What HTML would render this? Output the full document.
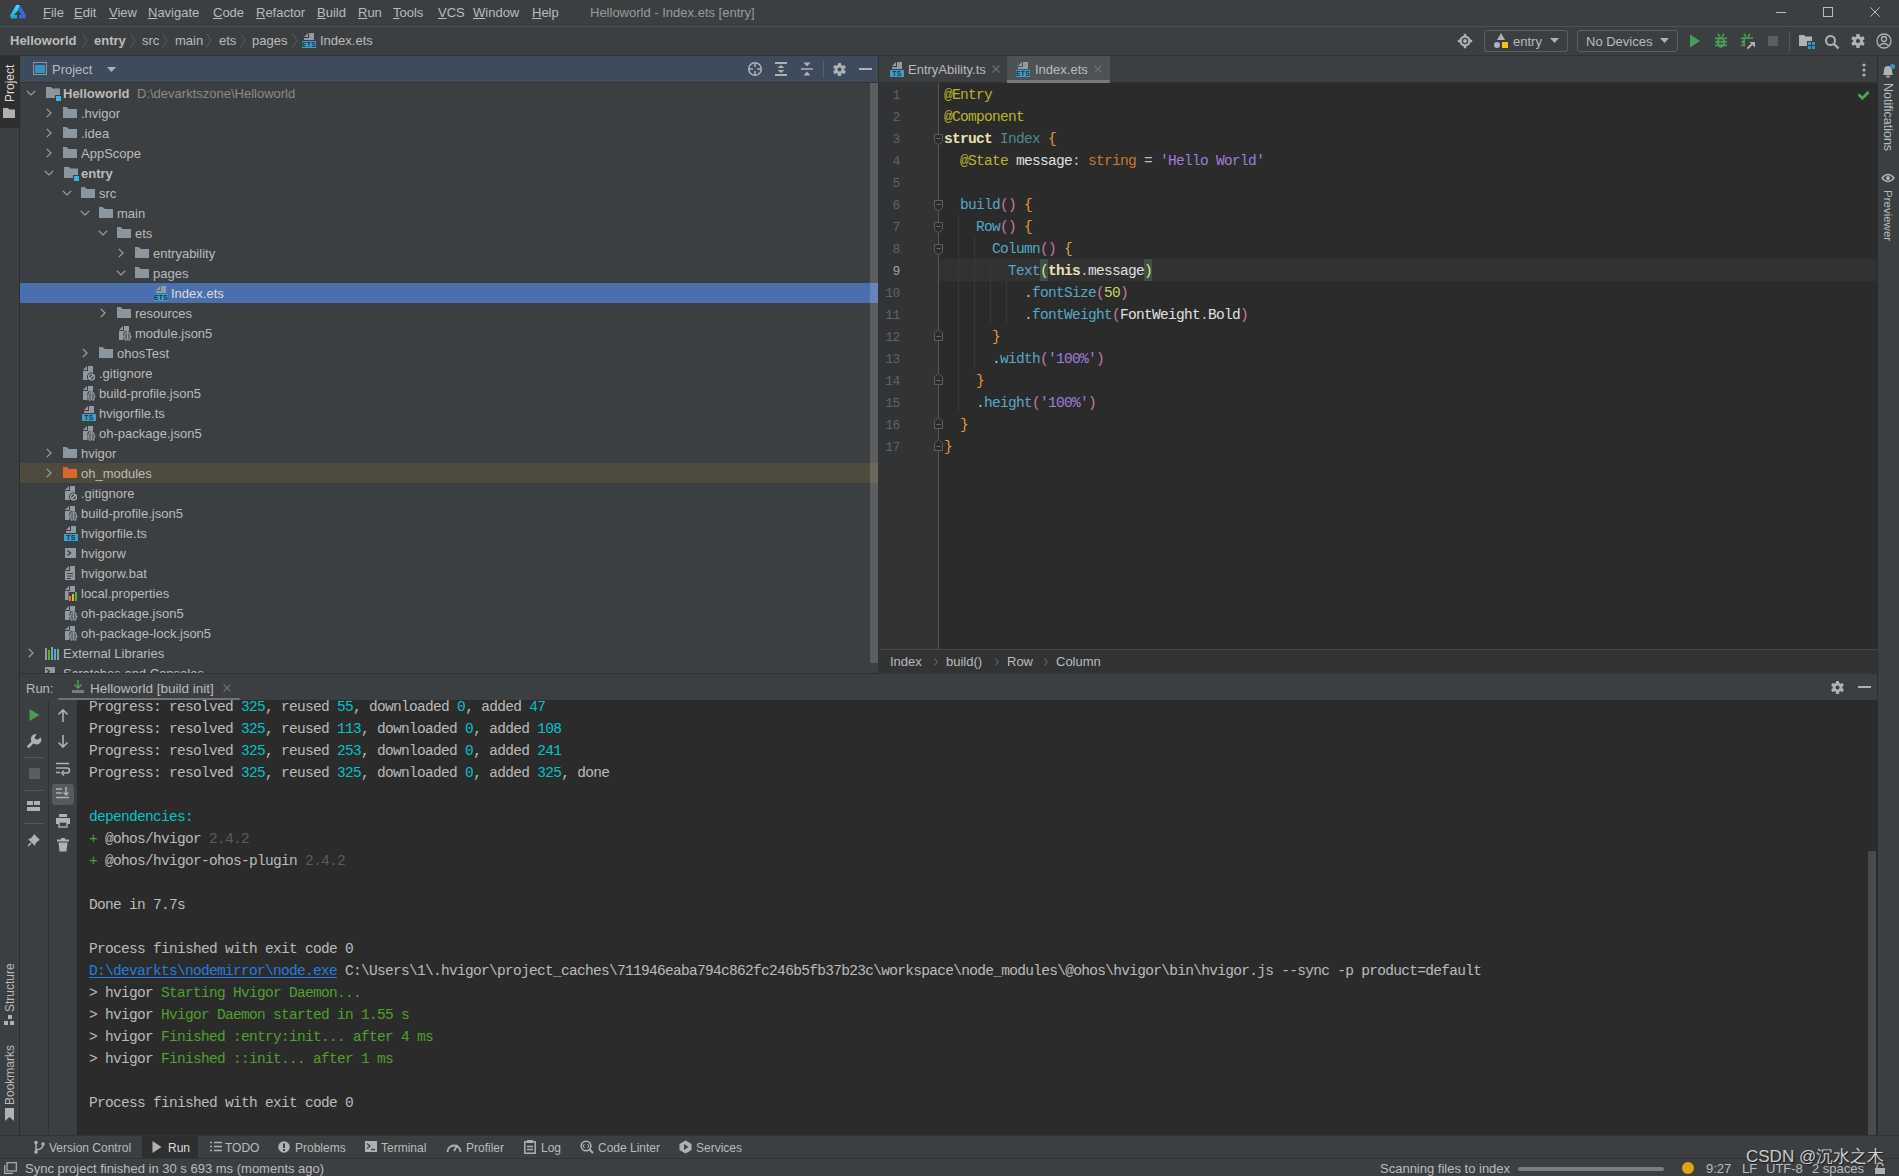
<!DOCTYPE html><html><head><meta charset="utf-8"><title>DevEco</title><style>
*{margin:0;padding:0;box-sizing:border-box}
html,body{width:1899px;height:1176px;overflow:hidden;background:#3c3f41;font-family:"Liberation Sans", sans-serif;font-size:13px;color:#bbbbbb}
.a{position:absolute}
.t{position:absolute;white-space:pre;line-height:16px}
.m{position:absolute;white-space:pre;font-family:"Liberation Mono", monospace;font-size:14.5px;letter-spacing:-0.7px;line-height:22px;color:#bbbbbb}
svg{position:absolute;overflow:visible}
</style></head><body>
<div class="a" style="left:0px;top:0px;width:1899px;height:26px;background:#3c3f41;"></div>
<div class="a" style="left:0px;top:26px;width:1899px;height:1px;background:#4e5052;"></div>
<svg style="left:4px;top:0px" width="30" height="24" viewBox="0 0 30 24"><defs><linearGradient id="lg1" x1="0" y1="0" x2="0" y2="1"><stop offset="0" stop-color="#4ae0e8"/><stop offset="1" stop-color="#18a2d8"/></linearGradient><linearGradient id="lg2" x1="0" y1="0" x2="1" y2="1"><stop offset="0" stop-color="#2a6ed8"/><stop offset="1" stop-color="#4068d8"/></linearGradient></defs><path d="M12.2 4.9 L15.9 4.9 L14.1 10.2 L10 14.9 L13 14.9 L13 18.4 L7 18.4 L6 15.5 Z" fill="url(#lg1)"/><path d="M15.9 4.9 L22 15.5 L21 18.4 L15.1 18.4 L15.1 14.9 L18 14.9 L14.1 10.2 Z" fill="url(#lg2)"/></svg>
<div class="t" style="left:43px;top:5px;color:#bbbbbb"><u style="text-decoration-thickness:1px;text-underline-offset:1px">F</u>ile</div>
<div class="t" style="left:74px;top:5px;color:#bbbbbb"><u style="text-decoration-thickness:1px;text-underline-offset:1px">E</u>dit</div>
<div class="t" style="left:109px;top:5px;color:#bbbbbb"><u style="text-decoration-thickness:1px;text-underline-offset:1px">V</u>iew</div>
<div class="t" style="left:148px;top:5px;color:#bbbbbb"><u style="text-decoration-thickness:1px;text-underline-offset:1px">N</u>avigate</div>
<div class="t" style="left:213px;top:5px;color:#bbbbbb"><u style="text-decoration-thickness:1px;text-underline-offset:1px">C</u>ode</div>
<div class="t" style="left:256px;top:5px;color:#bbbbbb"><u style="text-decoration-thickness:1px;text-underline-offset:1px">R</u>efactor</div>
<div class="t" style="left:317px;top:5px;color:#bbbbbb"><u style="text-decoration-thickness:1px;text-underline-offset:1px">B</u>uild</div>
<div class="t" style="left:358px;top:5px;color:#bbbbbb"><u style="text-decoration-thickness:1px;text-underline-offset:1px">R</u>un</div>
<div class="t" style="left:393px;top:5px;color:#bbbbbb"><u style="text-decoration-thickness:1px;text-underline-offset:1px">T</u>ools</div>
<div class="t" style="left:438px;top:5px;color:#bbbbbb"><u style="text-decoration-thickness:1px;text-underline-offset:1px">V</u>CS</div>
<div class="t" style="left:473px;top:5px;color:#bbbbbb"><u style="text-decoration-thickness:1px;text-underline-offset:1px">W</u>indow</div>
<div class="t" style="left:532px;top:5px;color:#bbbbbb"><u style="text-decoration-thickness:1px;text-underline-offset:1px">H</u>elp</div>
<div class="t" style="left:590px;top:5px;color:#9a9a9a;font-size:13px;font-weight:normal;">Helloworld - Index.ets [entry]</div>
<div class="a" style="left:1776px;top:12px;width:10px;height:1px;background:#bbbbbb;"></div>
<div class="a" style="left:1823px;top:7px;width:10px;height:10px;background:transparent;border:1px solid #bbbbbb"></div>
<svg style="left:1870px;top:7px" width="10" height="10" viewBox="0 0 10 10"><path d="M0.3 0.3 L9.7 9.7 M9.7 0.3 L0.3 9.7" stroke="#bbbbbb" stroke-width="1"/></svg>
<div class="a" style="left:0px;top:27px;width:1899px;height:28px;background:#3c3f41;"></div>
<div class="a" style="left:0px;top:55px;width:1899px;height:1px;background:#323232;"></div>
<div class="t" style="left:10px;top:33px;color:#bbbbbb;font-size:13px;font-weight:bold;">Helloworld</div>
<svg style="left:82px;top:33px" width="6" height="15" viewBox="0 0 6 15"><path d="M0.5 0.5 L5 7.5 L0.5 14.5" stroke="#5a5d5f" stroke-width="1" fill="none"/></svg>
<div class="t" style="left:94px;top:33px;color:#bbbbbb;font-size:13px;font-weight:bold;">entry</div>
<svg style="left:130px;top:33px" width="6" height="15" viewBox="0 0 6 15"><path d="M0.5 0.5 L5 7.5 L0.5 14.5" stroke="#5a5d5f" stroke-width="1" fill="none"/></svg>
<div class="t" style="left:142px;top:33px;color:#bbbbbb;font-size:13px;font-weight:normal;">src</div>
<svg style="left:162px;top:33px" width="6" height="15" viewBox="0 0 6 15"><path d="M0.5 0.5 L5 7.5 L0.5 14.5" stroke="#5a5d5f" stroke-width="1" fill="none"/></svg>
<div class="t" style="left:175px;top:33px;color:#bbbbbb;font-size:13px;font-weight:normal;">main</div>
<svg style="left:206px;top:33px" width="6" height="15" viewBox="0 0 6 15"><path d="M0.5 0.5 L5 7.5 L0.5 14.5" stroke="#5a5d5f" stroke-width="1" fill="none"/></svg>
<div class="t" style="left:219px;top:33px;color:#bbbbbb;font-size:13px;font-weight:normal;">ets</div>
<svg style="left:240px;top:33px" width="6" height="15" viewBox="0 0 6 15"><path d="M0.5 0.5 L5 7.5 L0.5 14.5" stroke="#5a5d5f" stroke-width="1" fill="none"/></svg>
<div class="t" style="left:252px;top:33px;color:#bbbbbb;font-size:13px;font-weight:normal;">pages</div>
<svg style="left:292px;top:33px" width="6" height="15" viewBox="0 0 6 15"><path d="M0.5 0.5 L5 7.5 L0.5 14.5" stroke="#5a5d5f" stroke-width="1" fill="none"/></svg>
<svg style="left:301px;top:32px" width="16" height="16" viewBox="0 0 16 16"><path d="M3 5 L7 1 V5 Z" fill="#8f9aa3"/><path d="M8 1 H13 V8 H3 V6 H8 Z" fill="#8f9aa3"/><rect x="1" y="9" width="14" height="7" fill="#3f9dc8"/><text x="8" y="15" font-family="Liberation Sans" font-size="6.8" fill="#1d3340" text-anchor="middle" font-weight="bold" letter-spacing="0.3">ETS</text></svg>
<div class="t" style="left:320px;top:33px;color:#bbbbbb;font-size:13px;font-weight:normal;">Index.ets</div>
<svg style="left:1457px;top:33px" width="16" height="16" viewBox="0 0 16 16"><circle cx="8" cy="8" r="5.6" fill="#afb1b3"/><rect x="6.8" y="0.8" width="2.4" height="3" fill="#afb1b3"/><rect x="6.8" y="12.2" width="2.4" height="3" fill="#afb1b3"/><rect x="0.8" y="6.8" width="3" height="2.4" fill="#afb1b3"/><rect x="12.2" y="6.8" width="3" height="2.4" fill="#afb1b3"/><circle cx="8" cy="8" r="2.6" fill="none" stroke="#3c3f41" stroke-width="1.3"/></svg>
<div class="a" style="left:1484px;top:30px;width:84px;height:22px;background:transparent;border:1px solid #5e6060;border-radius:3px"></div>
<svg style="left:1493px;top:33px" width="16" height="16" viewBox="0 0 16 16"><path d="M8 0 L12 7 H4 Z" fill="#afb1b3"/><circle cx="4" cy="12" r="3" fill="#afb1b3"/><rect x="9" y="9" width="6" height="6" fill="#f4c01e"/></svg>
<div class="t" style="left:1513px;top:34px;color:#bbbbbb;font-size:13px;font-weight:normal;">entry</div>
<svg style="left:1550px;top:38px" width="10" height="6" viewBox="0 0 10 6"><path d="M0 0 H9 L4.5 5 Z" fill="#afb1b3"/></svg>
<div class="a" style="left:1577px;top:30px;width:101px;height:22px;background:transparent;border:1px solid #5e6060;border-radius:3px"></div>
<div class="t" style="left:1586px;top:34px;color:#bbbbbb;font-size:13px;font-weight:normal;">No Devices</div>
<svg style="left:1660px;top:38px" width="10" height="6" viewBox="0 0 10 6"><path d="M0 0 H9 L4.5 5 Z" fill="#afb1b3"/></svg>
<svg style="left:1689px;top:34px" width="12" height="14" viewBox="0 0 12 14"><path d="M1 0.5 L11 7 L1 13.5 Z" fill="#499c54"/></svg>
<svg style="left:1713px;top:33px" width="16" height="16" viewBox="0 0 16 16"><ellipse cx="8" cy="9.3" rx="4.2" ry="5.4" fill="#499c54"/><rect x="2" y="4.4" width="12" height="1.7" fill="#499c54"/><rect x="2" y="7.9" width="12" height="1.7" fill="#499c54"/><rect x="2" y="11.5" width="12" height="1.7" fill="#499c54"/><rect x="6" y="6.6" width="4" height="1.2" fill="#3c3f41"/><rect x="6" y="9.9" width="4" height="1.2" fill="#3c3f41"/><path d="M5 0.8 L7 3.8 M11 0.8 L9 3.8" stroke="#499c54" stroke-width="1.6"/></svg>
<svg style="left:1739px;top:33px" width="16" height="16" viewBox="0 0 16 16"><ellipse cx="8" cy="9.3" rx="4.2" ry="5.4" fill="#499c54"/><rect x="2" y="4.4" width="12" height="1.7" fill="#499c54"/><rect x="2" y="7.9" width="12" height="1.7" fill="#499c54"/><rect x="2" y="11.5" width="12" height="1.7" fill="#499c54"/><rect x="6" y="6.6" width="4" height="1.2" fill="#3c3f41"/><rect x="6" y="9.9" width="4" height="1.2" fill="#3c3f41"/><path d="M5 0.8 L7 3.8 M11 0.8 L9 3.8" stroke="#499c54" stroke-width="1.6"/></svg>
<svg style="left:1746px;top:40px" width="10" height="10" viewBox="0 0 10 10"><rect x="-1" y="-1" width="12" height="12" fill="#3c3f41"/><path d="M1.5 8.5 L6 4" stroke="#afb1b3" stroke-width="2"/><path d="M3.5 2 H9 V7.5 Z" fill="#afb1b3"/></svg>
<div class="a" style="left:1768px;top:36px;width:10px;height:10px;background:#5b5d5f;"></div>
<div class="a" style="left:1789px;top:31px;width:1px;height:20px;background:#55585a;"></div>
<svg style="left:1798px;top:33px" width="18" height="16" viewBox="0 0 18 16"><path d="M1 2 H6 L7.5 3.5 H14 V13 H1 Z" fill="#afb1b3"/><rect x="9" y="8" width="9" height="8" fill="#3c3f41"/><rect x="10" y="9" width="3" height="3" fill="#3592c4"/><rect x="14" y="9" width="3" height="3" fill="#3592c4"/><rect x="10" y="13" width="3" height="3" fill="#3592c4"/><rect x="14" y="13" width="3" height="3" fill="#3592c4"/></svg>
<svg style="left:1824px;top:34px" width="16" height="16" viewBox="0 0 16 16"><circle cx="6.5" cy="6.5" r="4.5" fill="none" stroke="#afb1b3" stroke-width="2"/><path d="M10 10 L14.5 14.5" stroke="#afb1b3" stroke-width="2.4"/></svg>
<svg style="left:1850px;top:33px" width="16" height="16" viewBox="0 0 16 16"><g transform="scale(1.0)"><circle cx="8" cy="8" r="5" fill="#afb1b3"/><g fill="#afb1b3"><rect x="6.2" y="1" width="3.6" height="14" rx="1"/><rect x="6.2" y="1" width="3.6" height="14" rx="1" transform="rotate(60 8 8)"/><rect x="6.2" y="1" width="3.6" height="14" rx="1" transform="rotate(120 8 8)"/></g><circle cx="8" cy="8" r="2.1" fill="#3c3f41"/></g></svg>
<svg style="left:1876px;top:33px" width="16" height="16" viewBox="0 0 16 16"><circle cx="8" cy="8" r="7" fill="none" stroke="#afb1b3" stroke-width="1.3"/><circle cx="8" cy="6" r="2.5" fill="none" stroke="#afb1b3" stroke-width="1.3"/><path d="M3.5 12.5 Q8 8.5 12.5 12.5" fill="none" stroke="#afb1b3" stroke-width="1.3"/></svg>
<div class="a" style="left:0px;top:56px;width:19px;height:1080px;background:#3c3f41;"></div>
<div class="a" style="left:19px;top:56px;width:1px;height:1080px;background:#2b2b2b;"></div>
<div class="a" style="left:0px;top:56px;width:19px;height:72px;background:#2d2f30;"></div>
<div class="t" style="left:0px;top:-7px;color:#dddddd;font-size:12px;font-weight:normal;transform:rotate(-90deg);transform-origin:0 0;left:2px;top:102px">Project</div>
<svg style="left:3px;top:107px" width="13" height="12" viewBox="0 0 13 12"><path d="M0 1 H5 L6.5 2.5 H12 V11 H0 Z" fill="#afb1b3"/></svg>
<div class="t" style="left:0px;top:-7px;color:#bbbbbb;font-size:12px;font-weight:normal;transform:rotate(-90deg);transform-origin:0 0;left:2px;top:1012px">Structure</div>
<svg style="left:4px;top:1015px" width="12" height="12" viewBox="0 0 12 12"><rect x="4" y="0" width="4" height="4" fill="#afb1b3"/><rect x="0" y="6" width="4" height="4" fill="#afb1b3"/><rect x="6" y="6" width="4" height="4" fill="#afb1b3"/></svg>
<div class="t" style="left:0px;top:-7px;color:#bbbbbb;font-size:12px;font-weight:normal;transform:rotate(-90deg);transform-origin:0 0;left:2px;top:1105px">Bookmarks</div>
<svg style="left:4px;top:1108px" width="12" height="14" viewBox="0 0 12 14"><path d="M1 0 H10 V13 L5.5 9 L1 13 Z" fill="#afb1b3"/></svg>
<div class="a" style="left:1877px;top:56px;width:1px;height:1080px;background:#2b2b2b;"></div>
<div class="a" style="left:1878px;top:56px;width:21px;height:1080px;background:#3c3f41;"></div>
<svg style="left:1881px;top:64px" width="14" height="14" viewBox="0 0 14 14"><path d="M2 11 Q3 9 3 6 Q3 2 7 2 Q11 2 11 6 Q11 9 12 11 Z" fill="#afb1b3"/><rect x="5.5" y="11.5" width="3" height="2" fill="#afb1b3"/><circle cx="11.5" cy="2.5" r="2.5" fill="#3592c4"/></svg>
<div class="t" style="left:0px;top:-7px;color:#bbbbbb;font-size:12.5px;font-weight:normal;transform:rotate(90deg);transform-origin:0 0;left:1896px;top:83px">Notifications</div>
<svg style="left:1881px;top:173px" width="14" height="10" viewBox="0 0 14 10"><path d="M1 5 Q7 -2 13 5 Q7 12 1 5 Z" fill="none" stroke="#afb1b3" stroke-width="1.4"/><circle cx="7" cy="5" r="2" fill="#afb1b3"/></svg>
<div class="t" style="left:0px;top:-7px;color:#bbbbbb;font-size:11.5px;font-weight:normal;transform:rotate(90deg);transform-origin:0 0;left:1896px;top:190px">Previewer</div>
<div class="a" style="left:20px;top:56px;width:859px;height:26px;background:#3d4b5c;"></div>
<div class="a" style="left:20px;top:82px;width:858px;height:1px;background:#323232;"></div>
<div class="a" style="left:20px;top:83px;width:858px;height:590px;background:#3c3f41;"></div>
<svg style="left:33px;top:62px" width="14" height="13" viewBox="0 0 14 13"><rect x="0.5" y="0.5" width="13" height="12" fill="none" stroke="#8a96a3" stroke-width="1"/><rect x="2" y="3" width="10" height="8" fill="#3592c4"/></svg>
<div class="t" style="left:52px;top:62px;color:#bbbbbb;font-size:13px;font-weight:normal;">Project</div>
<svg style="left:107px;top:67px" width="10" height="6" viewBox="0 0 10 6"><path d="M0 0 H9 L4.5 5 Z" fill="#afb1b3"/></svg>
<svg style="left:747px;top:61px" width="16" height="16" viewBox="0 0 16 16"><circle cx="8" cy="8" r="6.3" fill="none" stroke="#afb1b3" stroke-width="1.5"/><path d="M8 2 V6 M8 10 V14 M2 8 H6 M10 8 H14" stroke="#afb1b3" stroke-width="1.5"/></svg>
<svg style="left:773px;top:61px" width="16" height="16" viewBox="0 0 16 16"><path d="M2 2 H14 M2 14 H14" stroke="#afb1b3" stroke-width="1.8"/><path d="M4.5 7 L8 4 L11.5 7 Z M4.5 9 L8 12 L11.5 9 Z" fill="#afb1b3"/></svg>
<svg style="left:799px;top:61px" width="16" height="16" viewBox="0 0 16 16"><path d="M2 8 H14" stroke="#afb1b3" stroke-width="1.5"/><path d="M4.5 1.5 L8 5.5 L11.5 1.5 Z M4.5 14.5 L8 10.5 L11.5 14.5 Z" fill="#afb1b3"/></svg>
<div class="a" style="left:823px;top:60px;width:1px;height:18px;background:#55606d;"></div>
<svg style="left:832px;top:62px" width="15" height="15" viewBox="0 0 15 15"><g transform="scale(0.9375)"><circle cx="8" cy="8" r="5" fill="#afb1b3"/><g fill="#afb1b3"><rect x="6.2" y="1" width="3.6" height="14" rx="1"/><rect x="6.2" y="1" width="3.6" height="14" rx="1" transform="rotate(60 8 8)"/><rect x="6.2" y="1" width="3.6" height="14" rx="1" transform="rotate(120 8 8)"/></g><circle cx="8" cy="8" r="2.1" fill="#3d4b5c"/></g></svg>
<div class="a" style="left:859px;top:68px;width:13px;height:2px;background:#afb1b3;"></div>
<svg style="left:26px;top:90px" width="10" height="6" viewBox="0 0 10 6"><path d="M0.8 0.8 L5 5 L9.2 0.8" stroke="#a0a0a0" stroke-width="1.2" fill="none"/></svg>
<svg style="left:45px;top:85px" width="16" height="16" viewBox="0 0 16 16"><path d="M1 2 H6 L7.5 3.5 H15 V13 H1 Z" fill="#8c969e"/><rect x="10" y="10" width="6" height="6" fill="#3c3f41"/><rect x="11" y="11" width="5" height="5" fill="#3eb1e3"/></svg>
<div class="t" style="left:63px;top:86px;color:#bbbbbb;font-size:13px;font-weight:bold;">Helloworld</div>
<div class="t" style="left:137px;top:86px;color:#8a8a8a;font-size:13px;font-weight:normal;">D:\devarktszone\Helloworld</div>
<svg style="left:46px;top:108px" width="6" height="10" viewBox="0 0 6 10"><path d="M0.8 0.8 L5 5 L0.8 9.2" stroke="#a0a0a0" stroke-width="1.2" fill="none"/></svg>
<svg style="left:63px;top:105px" width="16" height="16" viewBox="0 0 16 16"><path d="M0 2 H3.5 L6 4 H14 V13 H0 Z" fill="#8c969e"/></svg>
<div class="t" style="left:81px;top:106px;color:#bbbbbb;font-size:13px;font-weight:normal;">.hvigor</div>
<svg style="left:46px;top:128px" width="6" height="10" viewBox="0 0 6 10"><path d="M0.8 0.8 L5 5 L0.8 9.2" stroke="#a0a0a0" stroke-width="1.2" fill="none"/></svg>
<svg style="left:63px;top:125px" width="16" height="16" viewBox="0 0 16 16"><path d="M0 2 H3.5 L6 4 H14 V13 H0 Z" fill="#8c969e"/></svg>
<div class="t" style="left:81px;top:126px;color:#bbbbbb;font-size:13px;font-weight:normal;">.idea</div>
<svg style="left:46px;top:148px" width="6" height="10" viewBox="0 0 6 10"><path d="M0.8 0.8 L5 5 L0.8 9.2" stroke="#a0a0a0" stroke-width="1.2" fill="none"/></svg>
<svg style="left:63px;top:145px" width="16" height="16" viewBox="0 0 16 16"><path d="M0 2 H3.5 L6 4 H14 V13 H0 Z" fill="#8c969e"/></svg>
<div class="t" style="left:81px;top:146px;color:#bbbbbb;font-size:13px;font-weight:normal;">AppScope</div>
<svg style="left:44px;top:170px" width="10" height="6" viewBox="0 0 10 6"><path d="M0.8 0.8 L5 5 L9.2 0.8" stroke="#a0a0a0" stroke-width="1.2" fill="none"/></svg>
<svg style="left:63px;top:165px" width="16" height="16" viewBox="0 0 16 16"><path d="M1 2 H6 L7.5 3.5 H15 V13 H1 Z" fill="#8c969e"/><rect x="10" y="10" width="6" height="6" fill="#3c3f41"/><rect x="11" y="11" width="5" height="5" fill="#3eb1e3"/></svg>
<div class="t" style="left:81px;top:166px;color:#bbbbbb;font-size:13px;font-weight:bold;">entry</div>
<svg style="left:62px;top:190px" width="10" height="6" viewBox="0 0 10 6"><path d="M0.8 0.8 L5 5 L9.2 0.8" stroke="#a0a0a0" stroke-width="1.2" fill="none"/></svg>
<svg style="left:81px;top:185px" width="16" height="16" viewBox="0 0 16 16"><path d="M0 2 H3.5 L6 4 H14 V13 H0 Z" fill="#8c969e"/></svg>
<div class="t" style="left:99px;top:186px;color:#bbbbbb;font-size:13px;font-weight:normal;">src</div>
<svg style="left:80px;top:210px" width="10" height="6" viewBox="0 0 10 6"><path d="M0.8 0.8 L5 5 L9.2 0.8" stroke="#a0a0a0" stroke-width="1.2" fill="none"/></svg>
<svg style="left:99px;top:205px" width="16" height="16" viewBox="0 0 16 16"><path d="M0 2 H3.5 L6 4 H14 V13 H0 Z" fill="#8c969e"/></svg>
<div class="t" style="left:117px;top:206px;color:#bbbbbb;font-size:13px;font-weight:normal;">main</div>
<svg style="left:98px;top:230px" width="10" height="6" viewBox="0 0 10 6"><path d="M0.8 0.8 L5 5 L9.2 0.8" stroke="#a0a0a0" stroke-width="1.2" fill="none"/></svg>
<svg style="left:117px;top:225px" width="16" height="16" viewBox="0 0 16 16"><path d="M0 2 H3.5 L6 4 H14 V13 H0 Z" fill="#8c969e"/></svg>
<div class="t" style="left:135px;top:226px;color:#bbbbbb;font-size:13px;font-weight:normal;">ets</div>
<svg style="left:118px;top:248px" width="6" height="10" viewBox="0 0 6 10"><path d="M0.8 0.8 L5 5 L0.8 9.2" stroke="#a0a0a0" stroke-width="1.2" fill="none"/></svg>
<svg style="left:135px;top:245px" width="16" height="16" viewBox="0 0 16 16"><path d="M0 2 H3.5 L6 4 H14 V13 H0 Z" fill="#8c969e"/></svg>
<div class="t" style="left:153px;top:246px;color:#bbbbbb;font-size:13px;font-weight:normal;">entryability</div>
<svg style="left:116px;top:270px" width="10" height="6" viewBox="0 0 10 6"><path d="M0.8 0.8 L5 5 L9.2 0.8" stroke="#a0a0a0" stroke-width="1.2" fill="none"/></svg>
<svg style="left:135px;top:265px" width="16" height="16" viewBox="0 0 16 16"><path d="M0 2 H3.5 L6 4 H14 V13 H0 Z" fill="#8c969e"/></svg>
<div class="t" style="left:153px;top:266px;color:#bbbbbb;font-size:13px;font-weight:normal;">pages</div>
<div class="a" style="left:20px;top:283px;width:858px;height:20px;background:#4b6eaf;"></div>
<svg style="left:153px;top:285px" width="16" height="16" viewBox="0 0 16 16"><path d="M3 5 L7 1 V5 Z" fill="#8f9aa3"/><path d="M8 1 H13 V8 H3 V6 H8 Z" fill="#8f9aa3"/><rect x="1" y="9" width="14" height="7" fill="#3f9dc8"/><text x="8" y="15" font-family="Liberation Sans" font-size="6.8" fill="#1d3340" text-anchor="middle" font-weight="bold" letter-spacing="0.3">ETS</text></svg>
<div class="t" style="left:171px;top:286px;color:#dddddd;font-size:13px;font-weight:normal;">Index.ets</div>
<svg style="left:100px;top:308px" width="6" height="10" viewBox="0 0 6 10"><path d="M0.8 0.8 L5 5 L0.8 9.2" stroke="#a0a0a0" stroke-width="1.2" fill="none"/></svg>
<svg style="left:117px;top:305px" width="16" height="16" viewBox="0 0 16 16"><path d="M0 2 H3.5 L6 4 H14 V13 H0 Z" fill="#8c969e"/></svg>
<div class="t" style="left:135px;top:306px;color:#bbbbbb;font-size:13px;font-weight:normal;">resources</div>
<svg style="left:117px;top:325px" width="16" height="16" viewBox="0 0 16 16"><path d="M2 5 L6 1 V5 Z" fill="#8f9aa3"/><path d="M7 1 H12 V15 H2 V6 H7 Z" fill="#8f9aa3"/><path d="M9.5 7.5 Q8 7.5 8 9 V10.5 Q8 11.5 6.5 11.5 Q8 11.5 8 12.5 V14 Q8 15.5 9.5 15.5 M11.5 7.5 Q13 7.5 13 9 V10.5 Q13 11.5 14.5 11.5 Q13 11.5 13 12.5 V14 Q13 15.5 11.5 15.5" fill="none" stroke="#3c3f41" stroke-width="3.2"/><path d="M9.5 7.5 Q8 7.5 8 9 V10.5 Q8 11.5 6.5 11.5 Q8 11.5 8 12.5 V14 Q8 15.5 9.5 15.5 M11.5 7.5 Q13 7.5 13 9 V10.5 Q13 11.5 14.5 11.5 Q13 11.5 13 12.5 V14 Q13 15.5 11.5 15.5" fill="none" stroke="#9aa4ab" stroke-width="1.2"/></svg>
<div class="t" style="left:135px;top:326px;color:#bbbbbb;font-size:13px;font-weight:normal;">module.json5</div>
<svg style="left:82px;top:348px" width="6" height="10" viewBox="0 0 6 10"><path d="M0.8 0.8 L5 5 L0.8 9.2" stroke="#a0a0a0" stroke-width="1.2" fill="none"/></svg>
<svg style="left:99px;top:345px" width="16" height="16" viewBox="0 0 16 16"><path d="M0 2 H3.5 L6 4 H14 V13 H0 Z" fill="#8c969e"/></svg>
<div class="t" style="left:117px;top:346px;color:#bbbbbb;font-size:13px;font-weight:normal;">ohosTest</div>
<svg style="left:81px;top:365px" width="16" height="16" viewBox="0 0 16 16"><path d="M2 5 L6 1 V5 Z" fill="#8f9aa3"/><path d="M7 1 H12 V15 H2 V6 H7 Z" fill="#8f9aa3"/><circle cx="10.5" cy="12" r="4.6" fill="#3c3f41"/><circle cx="10.5" cy="12" r="3" fill="none" stroke="#a9b1b7" stroke-width="1.2"/><line x1="8.5" y1="14" x2="12.5" y2="10" stroke="#a9b1b7" stroke-width="1.2"/></svg>
<div class="t" style="left:99px;top:366px;color:#bbbbbb;font-size:13px;font-weight:normal;">.gitignore</div>
<svg style="left:81px;top:385px" width="16" height="16" viewBox="0 0 16 16"><path d="M2 5 L6 1 V5 Z" fill="#8f9aa3"/><path d="M7 1 H12 V15 H2 V6 H7 Z" fill="#8f9aa3"/><path d="M9.5 7.5 Q8 7.5 8 9 V10.5 Q8 11.5 6.5 11.5 Q8 11.5 8 12.5 V14 Q8 15.5 9.5 15.5 M11.5 7.5 Q13 7.5 13 9 V10.5 Q13 11.5 14.5 11.5 Q13 11.5 13 12.5 V14 Q13 15.5 11.5 15.5" fill="none" stroke="#3c3f41" stroke-width="3.2"/><path d="M9.5 7.5 Q8 7.5 8 9 V10.5 Q8 11.5 6.5 11.5 Q8 11.5 8 12.5 V14 Q8 15.5 9.5 15.5 M11.5 7.5 Q13 7.5 13 9 V10.5 Q13 11.5 14.5 11.5 Q13 11.5 13 12.5 V14 Q13 15.5 11.5 15.5" fill="none" stroke="#9aa4ab" stroke-width="1.2"/></svg>
<div class="t" style="left:99px;top:386px;color:#bbbbbb;font-size:13px;font-weight:normal;">build-profile.json5</div>
<svg style="left:81px;top:405px" width="16" height="16" viewBox="0 0 16 16"><path d="M3 5 L7 1 V5 Z" fill="#8f9aa3"/><path d="M8 1 H13 V8 H3 V6 H8 Z" fill="#8f9aa3"/><rect x="1" y="9" width="14" height="7" fill="#3f9dc8"/><text x="8" y="15" font-family="Liberation Sans" font-size="6.8" fill="#1d3340" text-anchor="middle" font-weight="bold" letter-spacing="0.3">TS</text></svg>
<div class="t" style="left:99px;top:406px;color:#bbbbbb;font-size:13px;font-weight:normal;">hvigorfile.ts</div>
<svg style="left:81px;top:425px" width="16" height="16" viewBox="0 0 16 16"><path d="M2 5 L6 1 V5 Z" fill="#8f9aa3"/><path d="M7 1 H12 V15 H2 V6 H7 Z" fill="#8f9aa3"/><path d="M9.5 7.5 Q8 7.5 8 9 V10.5 Q8 11.5 6.5 11.5 Q8 11.5 8 12.5 V14 Q8 15.5 9.5 15.5 M11.5 7.5 Q13 7.5 13 9 V10.5 Q13 11.5 14.5 11.5 Q13 11.5 13 12.5 V14 Q13 15.5 11.5 15.5" fill="none" stroke="#3c3f41" stroke-width="3.2"/><path d="M9.5 7.5 Q8 7.5 8 9 V10.5 Q8 11.5 6.5 11.5 Q8 11.5 8 12.5 V14 Q8 15.5 9.5 15.5 M11.5 7.5 Q13 7.5 13 9 V10.5 Q13 11.5 14.5 11.5 Q13 11.5 13 12.5 V14 Q13 15.5 11.5 15.5" fill="none" stroke="#9aa4ab" stroke-width="1.2"/></svg>
<div class="t" style="left:99px;top:426px;color:#bbbbbb;font-size:13px;font-weight:normal;">oh-package.json5</div>
<svg style="left:46px;top:448px" width="6" height="10" viewBox="0 0 6 10"><path d="M0.8 0.8 L5 5 L0.8 9.2" stroke="#a0a0a0" stroke-width="1.2" fill="none"/></svg>
<svg style="left:63px;top:445px" width="16" height="16" viewBox="0 0 16 16"><path d="M0 2 H3.5 L6 4 H14 V13 H0 Z" fill="#8c969e"/></svg>
<div class="t" style="left:81px;top:446px;color:#bbbbbb;font-size:13px;font-weight:normal;">hvigor</div>
<div class="a" style="left:20px;top:463px;width:858px;height:20px;background:#4e4b3e;"></div>
<svg style="left:46px;top:468px" width="6" height="10" viewBox="0 0 6 10"><path d="M0.8 0.8 L5 5 L0.8 9.2" stroke="#a0a0a0" stroke-width="1.2" fill="none"/></svg>
<svg style="left:63px;top:465px" width="16" height="16" viewBox="0 0 16 16"><path d="M0 2 H3.5 L6 4 H14 V13 H0 Z" fill="#d9692a"/></svg>
<div class="t" style="left:81px;top:466px;color:#bbbbbb;font-size:13px;font-weight:normal;">oh_modules</div>
<svg style="left:63px;top:485px" width="16" height="16" viewBox="0 0 16 16"><path d="M2 5 L6 1 V5 Z" fill="#8f9aa3"/><path d="M7 1 H12 V15 H2 V6 H7 Z" fill="#8f9aa3"/><circle cx="10.5" cy="12" r="4.6" fill="#3c3f41"/><circle cx="10.5" cy="12" r="3" fill="none" stroke="#a9b1b7" stroke-width="1.2"/><line x1="8.5" y1="14" x2="12.5" y2="10" stroke="#a9b1b7" stroke-width="1.2"/></svg>
<div class="t" style="left:81px;top:486px;color:#bbbbbb;font-size:13px;font-weight:normal;">.gitignore</div>
<svg style="left:63px;top:505px" width="16" height="16" viewBox="0 0 16 16"><path d="M2 5 L6 1 V5 Z" fill="#8f9aa3"/><path d="M7 1 H12 V15 H2 V6 H7 Z" fill="#8f9aa3"/><path d="M9.5 7.5 Q8 7.5 8 9 V10.5 Q8 11.5 6.5 11.5 Q8 11.5 8 12.5 V14 Q8 15.5 9.5 15.5 M11.5 7.5 Q13 7.5 13 9 V10.5 Q13 11.5 14.5 11.5 Q13 11.5 13 12.5 V14 Q13 15.5 11.5 15.5" fill="none" stroke="#3c3f41" stroke-width="3.2"/><path d="M9.5 7.5 Q8 7.5 8 9 V10.5 Q8 11.5 6.5 11.5 Q8 11.5 8 12.5 V14 Q8 15.5 9.5 15.5 M11.5 7.5 Q13 7.5 13 9 V10.5 Q13 11.5 14.5 11.5 Q13 11.5 13 12.5 V14 Q13 15.5 11.5 15.5" fill="none" stroke="#9aa4ab" stroke-width="1.2"/></svg>
<div class="t" style="left:81px;top:506px;color:#bbbbbb;font-size:13px;font-weight:normal;">build-profile.json5</div>
<svg style="left:63px;top:525px" width="16" height="16" viewBox="0 0 16 16"><path d="M3 5 L7 1 V5 Z" fill="#8f9aa3"/><path d="M8 1 H13 V8 H3 V6 H8 Z" fill="#8f9aa3"/><rect x="1" y="9" width="14" height="7" fill="#3f9dc8"/><text x="8" y="15" font-family="Liberation Sans" font-size="6.8" fill="#1d3340" text-anchor="middle" font-weight="bold" letter-spacing="0.3">TS</text></svg>
<div class="t" style="left:81px;top:526px;color:#bbbbbb;font-size:13px;font-weight:normal;">hvigorfile.ts</div>
<svg style="left:63px;top:545px" width="16" height="16" viewBox="0 0 16 16"><rect x="2" y="3" width="11" height="10" fill="#8f9aa3"/><path d="M4.5 5.5 L7.5 8 L4.5 10.5" stroke="#3c3f41" stroke-width="1.4" fill="none"/></svg>
<div class="t" style="left:81px;top:546px;color:#bbbbbb;font-size:13px;font-weight:normal;">hvigorw</div>
<svg style="left:63px;top:565px" width="16" height="16" viewBox="0 0 16 16"><path d="M2 5 L6 1 V5 Z" fill="#8f9aa3"/><path d="M7 1 H12 V15 H2 V6 H7 Z" fill="#8f9aa3"/><path d="M4 8.5 H10 M4 11 H10 M4 13.5 H8" stroke="#3c3f41" stroke-width="1"/></svg>
<div class="t" style="left:81px;top:566px;color:#bbbbbb;font-size:13px;font-weight:normal;">hvigorw.bat</div>
<svg style="left:63px;top:585px" width="16" height="16" viewBox="0 0 16 16"><path d="M2 5 L6 1 V5 Z" fill="#8f9aa3"/><path d="M7 1 H12 V15 H2 V6 H7 Z" fill="#8f9aa3"/><rect x="5.5" y="7" width="10.5" height="9" fill="#3c3f41"/><rect x="6" y="11" width="2" height="5" fill="#f0762e"/><rect x="9" y="9" width="2" height="7" fill="#f0b030"/><rect x="12" y="7" width="2" height="9" fill="#55b038"/></svg>
<div class="t" style="left:81px;top:586px;color:#bbbbbb;font-size:13px;font-weight:normal;">local.properties</div>
<svg style="left:63px;top:605px" width="16" height="16" viewBox="0 0 16 16"><path d="M2 5 L6 1 V5 Z" fill="#8f9aa3"/><path d="M7 1 H12 V15 H2 V6 H7 Z" fill="#8f9aa3"/><path d="M9.5 7.5 Q8 7.5 8 9 V10.5 Q8 11.5 6.5 11.5 Q8 11.5 8 12.5 V14 Q8 15.5 9.5 15.5 M11.5 7.5 Q13 7.5 13 9 V10.5 Q13 11.5 14.5 11.5 Q13 11.5 13 12.5 V14 Q13 15.5 11.5 15.5" fill="none" stroke="#3c3f41" stroke-width="3.2"/><path d="M9.5 7.5 Q8 7.5 8 9 V10.5 Q8 11.5 6.5 11.5 Q8 11.5 8 12.5 V14 Q8 15.5 9.5 15.5 M11.5 7.5 Q13 7.5 13 9 V10.5 Q13 11.5 14.5 11.5 Q13 11.5 13 12.5 V14 Q13 15.5 11.5 15.5" fill="none" stroke="#9aa4ab" stroke-width="1.2"/></svg>
<div class="t" style="left:81px;top:606px;color:#bbbbbb;font-size:13px;font-weight:normal;">oh-package.json5</div>
<svg style="left:63px;top:625px" width="16" height="16" viewBox="0 0 16 16"><path d="M2 5 L6 1 V5 Z" fill="#8f9aa3"/><path d="M7 1 H12 V15 H2 V6 H7 Z" fill="#8f9aa3"/><path d="M9.5 7.5 Q8 7.5 8 9 V10.5 Q8 11.5 6.5 11.5 Q8 11.5 8 12.5 V14 Q8 15.5 9.5 15.5 M11.5 7.5 Q13 7.5 13 9 V10.5 Q13 11.5 14.5 11.5 Q13 11.5 13 12.5 V14 Q13 15.5 11.5 15.5" fill="none" stroke="#3c3f41" stroke-width="3.2"/><path d="M9.5 7.5 Q8 7.5 8 9 V10.5 Q8 11.5 6.5 11.5 Q8 11.5 8 12.5 V14 Q8 15.5 9.5 15.5 M11.5 7.5 Q13 7.5 13 9 V10.5 Q13 11.5 14.5 11.5 Q13 11.5 13 12.5 V14 Q13 15.5 11.5 15.5" fill="none" stroke="#9aa4ab" stroke-width="1.2"/></svg>
<div class="t" style="left:81px;top:626px;color:#bbbbbb;font-size:13px;font-weight:normal;">oh-package-lock.json5</div>
<svg style="left:28px;top:648px" width="6" height="10" viewBox="0 0 6 10"><path d="M0.8 0.8 L5 5 L0.8 9.2" stroke="#a0a0a0" stroke-width="1.2" fill="none"/></svg>
<svg style="left:45px;top:645px" width="16" height="16" viewBox="0 0 16 16"><rect x="0" y="3" width="2" height="12" fill="#8f9aa3"/><rect x="3" y="5" width="2" height="10" fill="#55b038"/><rect x="6" y="2" width="2" height="13" fill="#8f9aa3"/><rect x="9" y="4" width="2" height="11" fill="#3eb1e3"/><rect x="12" y="4" width="2" height="11" fill="#8f9aa3"/></svg>
<div class="t" style="left:63px;top:646px;color:#bbbbbb;font-size:13px;font-weight:normal;">External Libraries</div>
<svg style="left:45px;top:665px" width="16" height="16" viewBox="0 0 16 16"><rect x="0" y="2" width="10" height="9" fill="#8f9aa3"/><path d="M1.5 4 L4.5 6.5 L1.5 9" stroke="#3c3f41" stroke-width="1.3" fill="none"/><circle cx="11" cy="13" r="4" fill="#3592c4"/></svg>
<div class="t" style="left:63px;top:666px;color:#bbbbbb;font-size:13px;font-weight:normal;">Scratches and Consoles</div>
<div class="a" style="left:870px;top:83px;width:8px;height:580px;background:rgba(255,255,255,0.16);"></div>
<div class="a" style="left:878px;top:56px;width:2px;height:617px;background:#323232;"></div>
<div class="a" style="left:879px;top:56px;width:998px;height:26px;background:#3c3f41;"></div>
<div class="a" style="left:879px;top:82px;width:998px;height:1px;background:#323232;"></div>
<svg style="left:889px;top:61px" width="16" height="16" viewBox="0 0 16 16"><path d="M3 5 L7 1 V5 Z" fill="#8f9aa3"/><path d="M8 1 H13 V8 H3 V6 H8 Z" fill="#8f9aa3"/><rect x="1" y="9" width="14" height="7" fill="#3f9dc8"/><text x="8" y="15" font-family="Liberation Sans" font-size="6.8" fill="#1d3340" text-anchor="middle" font-weight="bold" letter-spacing="0.3">TS</text></svg>
<div class="t" style="left:908px;top:62px;color:#bbbbbb;font-size:13px;font-weight:normal;">EntryAbility.ts</div>
<svg style="left:992px;top:65px" width="8" height="8" viewBox="0 0 8 8"><path d="M0.5 0.5 L7.5 7.5 M7.5 0.5 L0.5 7.5" stroke="#6e7072" stroke-width="1.1"/></svg>
<div class="a" style="left:1007px;top:56px;width:103px;height:26px;background:#4e5254;"></div>
<div class="a" style="left:1007px;top:80px;width:103px;height:3px;background:#747a80;"></div>
<svg style="left:1015px;top:61px" width="16" height="16" viewBox="0 0 16 16"><path d="M3 5 L7 1 V5 Z" fill="#8f9aa3"/><path d="M8 1 H13 V8 H3 V6 H8 Z" fill="#8f9aa3"/><rect x="1" y="9" width="14" height="7" fill="#3f9dc8"/><text x="8" y="15" font-family="Liberation Sans" font-size="6.8" fill="#1d3340" text-anchor="middle" font-weight="bold" letter-spacing="0.3">ETS</text></svg>
<div class="t" style="left:1035px;top:62px;color:#bbbbbb;font-size:13px;font-weight:normal;">Index.ets</div>
<svg style="left:1094px;top:65px" width="8" height="8" viewBox="0 0 8 8"><path d="M0.5 0.5 L7.5 7.5 M7.5 0.5 L0.5 7.5" stroke="#6e7072" stroke-width="1.1"/></svg>
<svg style="left:1862px;top:63px" width="4" height="14" viewBox="0 0 4 14"><circle cx="2" cy="2" r="1.6" fill="#afb1b3"/><circle cx="2" cy="7" r="1.6" fill="#afb1b3"/><circle cx="2" cy="12" r="1.6" fill="#afb1b3"/></svg>
<div class="a" style="left:879px;top:83px;width:998px;height:566px;background:#2b2b2b;"></div>
<div class="a" style="left:879px;top:83px;width:60px;height:566px;background:#313335;"></div>
<div class="a" style="left:939px;top:259px;width:938px;height:22px;background:#323232;"></div>
<div class="a" style="left:938px;top:83px;width:1px;height:566px;background:#555555;"></div>
<div class="a" style="left:958px;top:215px;width:1px;height:198px;background:#393939;"></div>
<div class="a" style="left:974px;top:237px;width:1px;height:132px;background:#393939;"></div>
<div class="a" style="left:990px;top:259px;width:1px;height:66px;background:#393939;"></div>
<div class="a" style="left:1006px;top:281px;width:1px;height:44px;background:#393939;"></div>
<div class="m" style="left:860px;top:85px;color:#606366;font-size:13px;letter-spacing:-0.4px;width:40px;text-align:right">1</div>
<div class="m" style="left:860px;top:107px;color:#606366;font-size:13px;letter-spacing:-0.4px;width:40px;text-align:right">2</div>
<div class="m" style="left:860px;top:129px;color:#606366;font-size:13px;letter-spacing:-0.4px;width:40px;text-align:right">3</div>
<div class="m" style="left:860px;top:151px;color:#606366;font-size:13px;letter-spacing:-0.4px;width:40px;text-align:right">4</div>
<div class="m" style="left:860px;top:173px;color:#606366;font-size:13px;letter-spacing:-0.4px;width:40px;text-align:right">5</div>
<div class="m" style="left:860px;top:195px;color:#606366;font-size:13px;letter-spacing:-0.4px;width:40px;text-align:right">6</div>
<div class="m" style="left:860px;top:217px;color:#606366;font-size:13px;letter-spacing:-0.4px;width:40px;text-align:right">7</div>
<div class="m" style="left:860px;top:239px;color:#606366;font-size:13px;letter-spacing:-0.4px;width:40px;text-align:right">8</div>
<div class="m" style="left:860px;top:261px;color:#a4a3a3;font-size:13px;letter-spacing:-0.4px;width:40px;text-align:right">9</div>
<div class="m" style="left:860px;top:283px;color:#606366;font-size:13px;letter-spacing:-0.4px;width:40px;text-align:right">10</div>
<div class="m" style="left:860px;top:305px;color:#606366;font-size:13px;letter-spacing:-0.4px;width:40px;text-align:right">11</div>
<div class="m" style="left:860px;top:327px;color:#606366;font-size:13px;letter-spacing:-0.4px;width:40px;text-align:right">12</div>
<div class="m" style="left:860px;top:349px;color:#606366;font-size:13px;letter-spacing:-0.4px;width:40px;text-align:right">13</div>
<div class="m" style="left:860px;top:371px;color:#606366;font-size:13px;letter-spacing:-0.4px;width:40px;text-align:right">14</div>
<div class="m" style="left:860px;top:393px;color:#606366;font-size:13px;letter-spacing:-0.4px;width:40px;text-align:right">15</div>
<div class="m" style="left:860px;top:415px;color:#606366;font-size:13px;letter-spacing:-0.4px;width:40px;text-align:right">16</div>
<div class="m" style="left:860px;top:437px;color:#606366;font-size:13px;letter-spacing:-0.4px;width:40px;text-align:right">17</div>
<svg style="left:934px;top:134px" width="9" height="12" viewBox="0 0 9 12"><path d="M0.5 0.5 H8.5 V7.5 L4.5 11 L0.5 7.5 Z" fill="#2b2b2b" stroke="#5e5e5e" stroke-width="1"/><path d="M2.5 4.5 H6.5" stroke="#6a6a6a" stroke-width="1"/></svg>
<svg style="left:934px;top:200px" width="9" height="12" viewBox="0 0 9 12"><path d="M0.5 0.5 H8.5 V7.5 L4.5 11 L0.5 7.5 Z" fill="#2b2b2b" stroke="#5e5e5e" stroke-width="1"/><path d="M2.5 4.5 H6.5" stroke="#6a6a6a" stroke-width="1"/></svg>
<svg style="left:934px;top:222px" width="9" height="12" viewBox="0 0 9 12"><path d="M0.5 0.5 H8.5 V7.5 L4.5 11 L0.5 7.5 Z" fill="#2b2b2b" stroke="#5e5e5e" stroke-width="1"/><path d="M2.5 4.5 H6.5" stroke="#6a6a6a" stroke-width="1"/></svg>
<svg style="left:934px;top:244px" width="9" height="12" viewBox="0 0 9 12"><path d="M0.5 0.5 H8.5 V7.5 L4.5 11 L0.5 7.5 Z" fill="#2b2b2b" stroke="#5e5e5e" stroke-width="1"/><path d="M2.5 4.5 H6.5" stroke="#6a6a6a" stroke-width="1"/></svg>
<svg style="left:934px;top:329px" width="9" height="12" viewBox="0 0 9 12"><path d="M0.5 11.5 H8.5 V4 L4.5 0.5 L0.5 4 Z" fill="#2b2b2b" stroke="#5e5e5e" stroke-width="1"/><path d="M2.5 7.5 H6.5" stroke="#6a6a6a" stroke-width="1"/></svg>
<svg style="left:934px;top:373px" width="9" height="12" viewBox="0 0 9 12"><path d="M0.5 11.5 H8.5 V4 L4.5 0.5 L0.5 4 Z" fill="#2b2b2b" stroke="#5e5e5e" stroke-width="1"/><path d="M2.5 7.5 H6.5" stroke="#6a6a6a" stroke-width="1"/></svg>
<svg style="left:934px;top:417px" width="9" height="12" viewBox="0 0 9 12"><path d="M0.5 11.5 H8.5 V4 L4.5 0.5 L0.5 4 Z" fill="#2b2b2b" stroke="#5e5e5e" stroke-width="1"/><path d="M2.5 7.5 H6.5" stroke="#6a6a6a" stroke-width="1"/></svg>
<svg style="left:934px;top:439px" width="9" height="12" viewBox="0 0 9 12"><path d="M0.5 11.5 H8.5 V4 L4.5 0.5 L0.5 4 Z" fill="#2b2b2b" stroke="#5e5e5e" stroke-width="1"/><path d="M2.5 7.5 H6.5" stroke="#6a6a6a" stroke-width="1"/></svg>
<div class="a" style="left:1040px;top:259px;width:8px;height:22px;background:#3b514d;"></div>
<div class="a" style="left:1144px;top:259px;width:8px;height:22px;background:#3b514d;"></div>
<div class="m" style="left:944px;top:84px"><span style="color:#bbb529">@Entry</span></div>
<div class="m" style="left:944px;top:106px"><span style="color:#bbb529">@Component</span></div>
<div class="m" style="left:944px;top:128px"><span style="color:#e8e2b7;font-weight:bold">struct</span> <span style="color:#52878c">Index</span> <span style="color:#e09a3c">{</span></div>
<div class="m" style="left:944px;top:150px">  <span style="color:#bbb529">@State</span> <span style="color:#e0e0e0">message</span><span style="color:#bbbbbb">: </span><span style="color:#cc7832">string</span><span style="color:#bbbbbb"> = </span><span style="color:#a07cdc">&#x27;Hello World&#x27;</span></div>
<div class="m" style="left:944px;top:172px"></div>
<div class="m" style="left:944px;top:194px">  <span style="color:#56a8c7">build</span><span style="color:#c27ba0">()</span> <span style="color:#e09a3c">{</span></div>
<div class="m" style="left:944px;top:216px">    <span style="color:#56a8c7">Row</span><span style="color:#c27ba0">()</span> <span style="color:#e09a3c">{</span></div>
<div class="m" style="left:944px;top:238px">      <span style="color:#56a8c7">Column</span><span style="color:#c27ba0">()</span> <span style="color:#e09a3c">{</span></div>
<div class="m" style="left:944px;top:260px">        <span style="color:#56a8c7">Text</span><span style="color:#f0e060">(</span><span style="color:#e8e2b7;font-weight:bold">this</span><span style="color:#bbbbbb">.</span><span style="color:#e0e0e0">message</span><span style="color:#f0e060">)</span></div>
<div class="m" style="left:944px;top:282px">          <span style="color:#bbbbbb">.</span><span style="color:#56a8c7">fontSize</span><span style="color:#c27ba0">(</span><span style="color:#c7d35b">50</span><span style="color:#c27ba0">)</span></div>
<div class="m" style="left:944px;top:304px">          <span style="color:#bbbbbb">.</span><span style="color:#56a8c7">fontWeight</span><span style="color:#c27ba0">(</span><span style="color:#e0e0e0">FontWeight</span><span style="color:#bbbbbb">.</span><span style="color:#e0e0e0">Bold</span><span style="color:#c27ba0">)</span></div>
<div class="m" style="left:944px;top:326px">      <span style="color:#e09a3c">}</span></div>
<div class="m" style="left:944px;top:348px">      <span style="color:#bbbbbb">.</span><span style="color:#56a8c7">width</span><span style="color:#c27ba0">(</span><span style="color:#a07cdc">&#x27;100%&#x27;</span><span style="color:#c27ba0">)</span></div>
<div class="m" style="left:944px;top:370px">    <span style="color:#e09a3c">}</span></div>
<div class="m" style="left:944px;top:392px">    <span style="color:#bbbbbb">.</span><span style="color:#56a8c7">height</span><span style="color:#c27ba0">(</span><span style="color:#a07cdc">&#x27;100%&#x27;</span><span style="color:#c27ba0">)</span></div>
<div class="m" style="left:944px;top:414px">  <span style="color:#e09a3c">}</span></div>
<div class="m" style="left:944px;top:436px"><span style="color:#e09a3c">}</span></div>
<svg style="left:1857px;top:88px" width="13" height="13" viewBox="0 0 13 13"><path d="M1.6 6.4 L5.4 10.2 L11.6 4" stroke="#4ea555" stroke-width="2.8" fill="none"/></svg>
<div class="a" style="left:879px;top:649px;width:998px;height:1px;background:#464646;"></div>
<div class="a" style="left:879px;top:650px;width:998px;height:23px;background:#313335;"></div>
<div class="t" style="left:890px;top:654px;color:#bbbbbb;font-size:13px;font-weight:normal;">Index</div>
<div class="t" style="left:946px;top:654px;color:#bbbbbb;font-size:13px;font-weight:normal;">build()</div>
<div class="t" style="left:1007px;top:654px;color:#bbbbbb;font-size:13px;font-weight:normal;">Row</div>
<div class="t" style="left:1056px;top:654px;color:#bbbbbb;font-size:13px;font-weight:normal;">Column</div>
<svg style="left:934px;top:658px" width="4" height="8" viewBox="0 0 4 8"><path d="M0.5 0.5 L3.2 4 L0.5 7.5" stroke="#6e7072" stroke-width="1" fill="none"/></svg>
<svg style="left:995px;top:658px" width="4" height="8" viewBox="0 0 4 8"><path d="M0.5 0.5 L3.2 4 L0.5 7.5" stroke="#6e7072" stroke-width="1" fill="none"/></svg>
<svg style="left:1044px;top:658px" width="4" height="8" viewBox="0 0 4 8"><path d="M0.5 0.5 L3.2 4 L0.5 7.5" stroke="#6e7072" stroke-width="1" fill="none"/></svg>
<div class="a" style="left:20px;top:673px;width:1857px;height:1px;background:#323232;"></div>
<div class="a" style="left:20px;top:674px;width:1857px;height:26px;background:#3c3f41;"></div>
<div class="t" style="left:26px;top:681px;color:#bbbbbb;font-size:13px;font-weight:normal;">Run:</div>
<svg style="left:72px;top:680px" width="12" height="14" viewBox="0 0 12 14"><path d="M6 0 V8 M2.5 4.5 L6 8 L9.5 4.5" stroke="#4f9a4f" stroke-width="1.6" fill="none"/><rect x="0" y="10" width="12" height="3" fill="#7a7c7e"/></svg>
<div class="t" style="left:90px;top:681px;color:#bbbbbb;font-size:13.5px;font-weight:normal;">Helloworld [build init]</div>
<svg style="left:223px;top:684px" width="8" height="8" viewBox="0 0 8 8"><path d="M0.5 0.5 L7.5 7.5 M7.5 0.5 L0.5 7.5" stroke="#6e7072" stroke-width="1.1"/></svg>
<div class="a" style="left:58px;top:698px;width:182px;height:3px;background:#6e7377;border-radius:1.5px"></div>
<svg style="left:1830px;top:680px" width="15" height="15" viewBox="0 0 15 15"><g transform="scale(0.9375)"><circle cx="8" cy="8" r="5" fill="#afb1b3"/><g fill="#afb1b3"><rect x="6.2" y="1" width="3.6" height="14" rx="1"/><rect x="6.2" y="1" width="3.6" height="14" rx="1" transform="rotate(60 8 8)"/><rect x="6.2" y="1" width="3.6" height="14" rx="1" transform="rotate(120 8 8)"/></g><circle cx="8" cy="8" r="2.1" fill="#3c3f41"/></g></svg>
<div class="a" style="left:1858px;top:686px;width:13px;height:2px;background:#afb1b3;"></div>
<div class="a" style="left:20px;top:700px;width:1857px;height:435px;background:#3c3f41;"></div>
<div class="a" style="left:48px;top:700px;width:1px;height:435px;background:#323232;"></div>
<div class="a" style="left:77px;top:700px;width:1800px;height:435px;background:#2b2b2b;"></div>
<svg style="left:29px;top:709px" width="11" height="12" viewBox="0 0 11 12"><path d="M0.5 0 L10.5 6 L0.5 12 Z" fill="#499c54"/></svg>
<svg style="left:26px;top:733px" width="16" height="16" viewBox="0 0 16 16"><path d="M2.5 13.5 L8 8" stroke="#afb1b3" stroke-width="2.8" stroke-linecap="round"/><path d="M6.5 9.5 A4.8 4.8 0 0 1 10.5 1.2 L8.6 4.2 L9.6 6.4 L12 6.6 L14.8 4.6 A4.8 4.8 0 0 1 8 10.8 Z" fill="#afb1b3"/></svg>
<div class="a" style="left:24px;top:757px;width:20px;height:1px;background:#55585a;"></div>
<div class="a" style="left:29px;top:768px;width:11px;height:11px;background:#5b5d5f;"></div>
<div class="a" style="left:24px;top:790px;width:20px;height:1px;background:#55585a;"></div>
<svg style="left:27px;top:801px" width="14" height="11" viewBox="0 0 14 11"><rect x="0" y="0" width="6" height="4" fill="#afb1b3"/><rect x="7" y="0" width="6" height="4" fill="#afb1b3"/><rect x="0" y="6" width="13" height="4" fill="#afb1b3"/></svg>
<div class="a" style="left:24px;top:823px;width:20px;height:1px;background:#55585a;"></div>
<svg style="left:27px;top:833px" width="14" height="14" viewBox="0 0 14 14"><path d="M7 1 L13 7 L11 8 L8.5 10.5 L8 13 L1 6 L3.5 5.5 L6 3 Z" fill="#afb1b3"/><path d="M4 10 L1 13" stroke="#afb1b3" stroke-width="1.6"/></svg>
<svg style="left:57px;top:709px" width="12" height="13" viewBox="0 0 12 13"><path d="M6 1 V13 M1.5 5.5 L6 1 L10.5 5.5" stroke="#afb1b3" stroke-width="1.6" fill="none"/></svg>
<svg style="left:57px;top:735px" width="12" height="13" viewBox="0 0 12 13"><path d="M6 0 V12 M1.5 7.5 L6 12 L10.5 7.5" stroke="#afb1b3" stroke-width="1.6" fill="none"/></svg>
<svg style="left:56px;top:762px" width="14" height="13" viewBox="0 0 14 13"><path d="M0 1.5 H13 M0 6 H11 A2.5 2.5 0 0 1 11 11 H7 M0 10.5 H4" stroke="#afb1b3" stroke-width="1.5" fill="none"/><path d="M8 8.5 L5.5 11 L8 13.5" stroke="#afb1b3" stroke-width="1.3" fill="none"/></svg>
<div class="a" style="left:52px;top:784px;width:22px;height:21px;background:#565a5d;border-radius:3px"></div>
<svg style="left:56px;top:787px" width="14" height="14" viewBox="0 0 14 14"><path d="M0 2 H6 M0 6 H6 M0 10.5 H13" stroke="#afb1b3" stroke-width="1.5"/><path d="M10 0 V8 M7.5 5.5 L10 8 L12.5 5.5" stroke="#afb1b3" stroke-width="1.5" fill="none"/></svg>
<svg style="left:56px;top:814px" width="14" height="13" viewBox="0 0 14 13"><rect x="3" y="0" width="8" height="3" fill="#afb1b3"/><rect x="0" y="4" width="14" height="6" fill="#afb1b3"/><rect x="3" y="8" width="8" height="5" fill="#3c3f41" stroke="#afb1b3" stroke-width="1.4"/></svg>
<svg style="left:57px;top:838px" width="12" height="14" viewBox="0 0 12 14"><rect x="0" y="1.5" width="12" height="2" fill="#afb1b3"/><rect x="4" y="0" width="4" height="2" fill="#afb1b3"/><path d="M1.5 4.5 H10.5 L9.5 13.5 H2.5 Z" fill="#afb1b3"/></svg>
<div class="a" style="left:77px;top:700px;width:1800px;height:435px;overflow:hidden">
<div class="m" style="left:12px;top:-4px">Progress: resolved <span style="color:#00c4c8">325</span>, reused <span style="color:#00c4c8">55</span>, downloaded <span style="color:#00c4c8">0</span>, added <span style="color:#00c4c8">47</span></div>
<div class="m" style="left:12px;top:18px">Progress: resolved <span style="color:#00c4c8">325</span>, reused <span style="color:#00c4c8">113</span>, downloaded <span style="color:#00c4c8">0</span>, added <span style="color:#00c4c8">108</span></div>
<div class="m" style="left:12px;top:40px">Progress: resolved <span style="color:#00c4c8">325</span>, reused <span style="color:#00c4c8">253</span>, downloaded <span style="color:#00c4c8">0</span>, added <span style="color:#00c4c8">241</span></div>
<div class="m" style="left:12px;top:62px">Progress: resolved <span style="color:#00c4c8">325</span>, reused <span style="color:#00c4c8">325</span>, downloaded <span style="color:#00c4c8">0</span>, added <span style="color:#00c4c8">325</span>, done</div>
<div class="m" style="left:12px;top:106px"><span style="color:#00c4c8">dependencies:</span></div>
<div class="m" style="left:12px;top:128px"><span style="color:#50a02c">+</span> @ohos/hvigor <span style="color:#5b5b5b">2.4.2</span></div>
<div class="m" style="left:12px;top:150px"><span style="color:#50a02c">+</span> @ohos/hvigor-ohos-plugin <span style="color:#5b5b5b">2.4.2</span></div>
<div class="m" style="left:12px;top:194px">Done in 7.7s</div>
<div class="m" style="left:12px;top:238px">Process finished with exit code 0</div>
<div class="m" style="left:12px;top:260px"><span style="color:#287bde;text-decoration:underline;text-underline-offset:2px">D:\devarkts\nodemirror\node.exe</span> C:\Users\1\.hvigor\project_caches\711946eaba794c862fc246b5fb37b23c\workspace\node_modules\@ohos\hvigor\bin\hvigor.js --sync -p product=default</div>
<div class="m" style="left:12px;top:282px">&gt; hvigor <span style="color:#50a02c">Starting Hvigor Daemon...</span></div>
<div class="m" style="left:12px;top:304px">&gt; hvigor <span style="color:#50a02c">Hvigor Daemon started in 1.55 s</span></div>
<div class="m" style="left:12px;top:326px">&gt; hvigor <span style="color:#50a02c">Finished :entry:init... after 4 ms</span></div>
<div class="m" style="left:12px;top:348px">&gt; hvigor <span style="color:#50a02c">Finished ::init... after 1 ms</span></div>
<div class="m" style="left:12px;top:392px">Process finished with exit code 0</div>
</div>
<div class="a" style="left:1868px;top:851px;width:8px;height:284px;background:#4a4a4a;"></div>
<div class="a" style="left:0px;top:1135px;width:1899px;height:1px;background:#323232;"></div>
<div class="a" style="left:0px;top:1136px;width:1899px;height:22px;background:#3c3f41;"></div>
<div class="a" style="left:142px;top:1136px;width:56px;height:22px;background:#2d2f30;"></div>
<div class="t" style="left:49px;top:1140px;color:#bbbbbb;font-size:12px;font-weight:normal;">Version Control</div>
<div class="t" style="left:168px;top:1140px;color:#dddddd;font-size:12px;font-weight:normal;">Run</div>
<div class="t" style="left:225px;top:1140px;color:#bbbbbb;font-size:12px;font-weight:normal;">TODO</div>
<div class="t" style="left:295px;top:1140px;color:#bbbbbb;font-size:12px;font-weight:normal;">Problems</div>
<div class="t" style="left:381px;top:1140px;color:#bbbbbb;font-size:12px;font-weight:normal;">Terminal</div>
<div class="t" style="left:466px;top:1140px;color:#bbbbbb;font-size:12px;font-weight:normal;">Profiler</div>
<div class="t" style="left:541px;top:1140px;color:#bbbbbb;font-size:12px;font-weight:normal;">Log</div>
<div class="t" style="left:598px;top:1140px;color:#bbbbbb;font-size:12px;font-weight:normal;">Code Linter</div>
<div class="t" style="left:696px;top:1140px;color:#bbbbbb;font-size:12px;font-weight:normal;">Services</div>
<svg style="left:33px;top:1140px" width="12" height="14" viewBox="0 0 12 14"><circle cx="3" cy="2.5" r="1.8" fill="#afb1b3"/><circle cx="3" cy="12" r="1.8" fill="#afb1b3"/><circle cx="10" cy="4" r="1.8" fill="#afb1b3"/><path d="M3 3 V12 M10 5 Q10 9 3 10" stroke="#afb1b3" stroke-width="1.5" fill="none"/></svg>
<svg style="left:152px;top:1141px" width="10" height="12" viewBox="0 0 10 12"><path d="M0.5 0 L9.5 6 L0.5 12 Z" fill="#afb1b3"/></svg>
<svg style="left:210px;top:1141px" width="12" height="11" viewBox="0 0 12 11"><path d="M0 1.5 H2 M0 5.5 H2 M0 9.5 H2 M4 1.5 H12 M4 5.5 H12 M4 9.5 H12" stroke="#afb1b3" stroke-width="1.6"/></svg>
<svg style="left:278px;top:1141px" width="12" height="12" viewBox="0 0 12 12"><circle cx="6" cy="6" r="5.8" fill="#afb1b3"/><rect x="5" y="2.5" width="2" height="4.5" fill="#3c3f41"/><rect x="5" y="8" width="2" height="2" fill="#3c3f41"/></svg>
<svg style="left:365px;top:1141px" width="12" height="11" viewBox="0 0 12 11"><rect x="0" y="0" width="12" height="11" fill="#afb1b3"/><path d="M2 2.5 L5 5 L2 7.5" stroke="#3c3f41" stroke-width="1.4" fill="none"/><path d="M6 8.5 H10" stroke="#3c3f41" stroke-width="1.4"/></svg>
<svg style="left:446px;top:1140px" width="16" height="13" viewBox="0 0 16 13"><path d="M1.5 12 A6.5 6.5 0 1 1 14.5 12" stroke="#afb1b3" stroke-width="1.8" fill="none"/><path d="M8 11 L11.5 5" stroke="#afb1b3" stroke-width="1.8"/></svg>
<svg style="left:524px;top:1140px" width="12" height="14" viewBox="0 0 12 14"><rect x="0.8" y="1.8" width="10.4" height="11.4" fill="none" stroke="#afb1b3" stroke-width="1.5"/><rect x="3" y="0" width="6" height="3" fill="#afb1b3"/><path d="M3 6.5 H9 M3 9.5 H9" stroke="#afb1b3" stroke-width="1.3"/></svg>
<svg style="left:580px;top:1140px" width="14" height="14" viewBox="0 0 14 14"><circle cx="6" cy="6" r="4.8" fill="none" stroke="#afb1b3" stroke-width="1.6"/><path d="M9.5 9.5 L13 13" stroke="#afb1b3" stroke-width="2"/><path d="M4.5 4 L3 6 L4.5 8 M7.5 4 L9 6 L7.5 8" stroke="#afb1b3" stroke-width="1" fill="none"/></svg>
<svg style="left:679px;top:1140px" width="13" height="14" viewBox="0 0 13 14"><path d="M6.5 0.5 L12.5 4 V10 L6.5 13.5 L0.5 10 V4 Z" fill="#afb1b3"/><path d="M5 4 L9.5 7 L5 10 Z" fill="#3c3f41"/></svg>
<div class="a" style="left:0px;top:1158px;width:1899px;height:1px;background:#323232;"></div>
<div class="a" style="left:0px;top:1159px;width:1899px;height:17px;background:#3c3f41;"></div>
<svg style="left:4px;top:1162px" width="13" height="12" viewBox="0 0 13 12"><rect x="3" y="0.7" width="9.3" height="8.3" fill="none" stroke="#afb1b3" stroke-width="1.2"/><path d="M0.7 3 V11.3 H9" fill="none" stroke="#afb1b3" stroke-width="1.2"/></svg>
<div class="t" style="left:25px;top:1161px;color:#bbbbbb;font-size:13px;font-weight:normal;">Sync project finished in 30 s 693 ms (moments ago)</div>
<div class="t" style="left:1380px;top:1161px;color:#bbbbbb;font-size:13px;font-weight:normal;">Scanning files to index</div>
<div class="a" style="left:1518px;top:1167px;width:146px;height:4px;background:#7a7d80;border-radius:2px"></div>
<svg style="left:1682px;top:1162px" width="12" height="12" viewBox="0 0 12 12"><circle cx="6" cy="6" r="6" fill="#e5a50a"/></svg>
<div class="t" style="left:1706px;top:1161px;color:#bbbbbb;font-size:13px;font-weight:normal;">9:27</div>
<div class="t" style="left:1742px;top:1161px;color:#bbbbbb;font-size:13px;font-weight:normal;">LF</div>
<div class="t" style="left:1766px;top:1161px;color:#bbbbbb;font-size:13px;font-weight:normal;">UTF-8</div>
<div class="t" style="left:1812px;top:1161px;color:#bbbbbb;font-size:13px;font-weight:normal;">2 spaces</div>
<svg style="left:1875px;top:1163px" width="11" height="11" viewBox="0 0 11 11"><rect x="0" y="5" width="10" height="6" fill="#afb1b3"/><path d="M2 5 V3 A3 3 0 0 1 8 3" stroke="#afb1b3" stroke-width="1.4" fill="none"/></svg>
<div class="t" style="left:1746px;top:1146px;font-size:17px;line-height:22px;color:rgba(235,235,235,0.85);text-shadow:1px 1px 1px rgba(0,0,0,0.6)">CSDN @沉水之木</div>
</body></html>
